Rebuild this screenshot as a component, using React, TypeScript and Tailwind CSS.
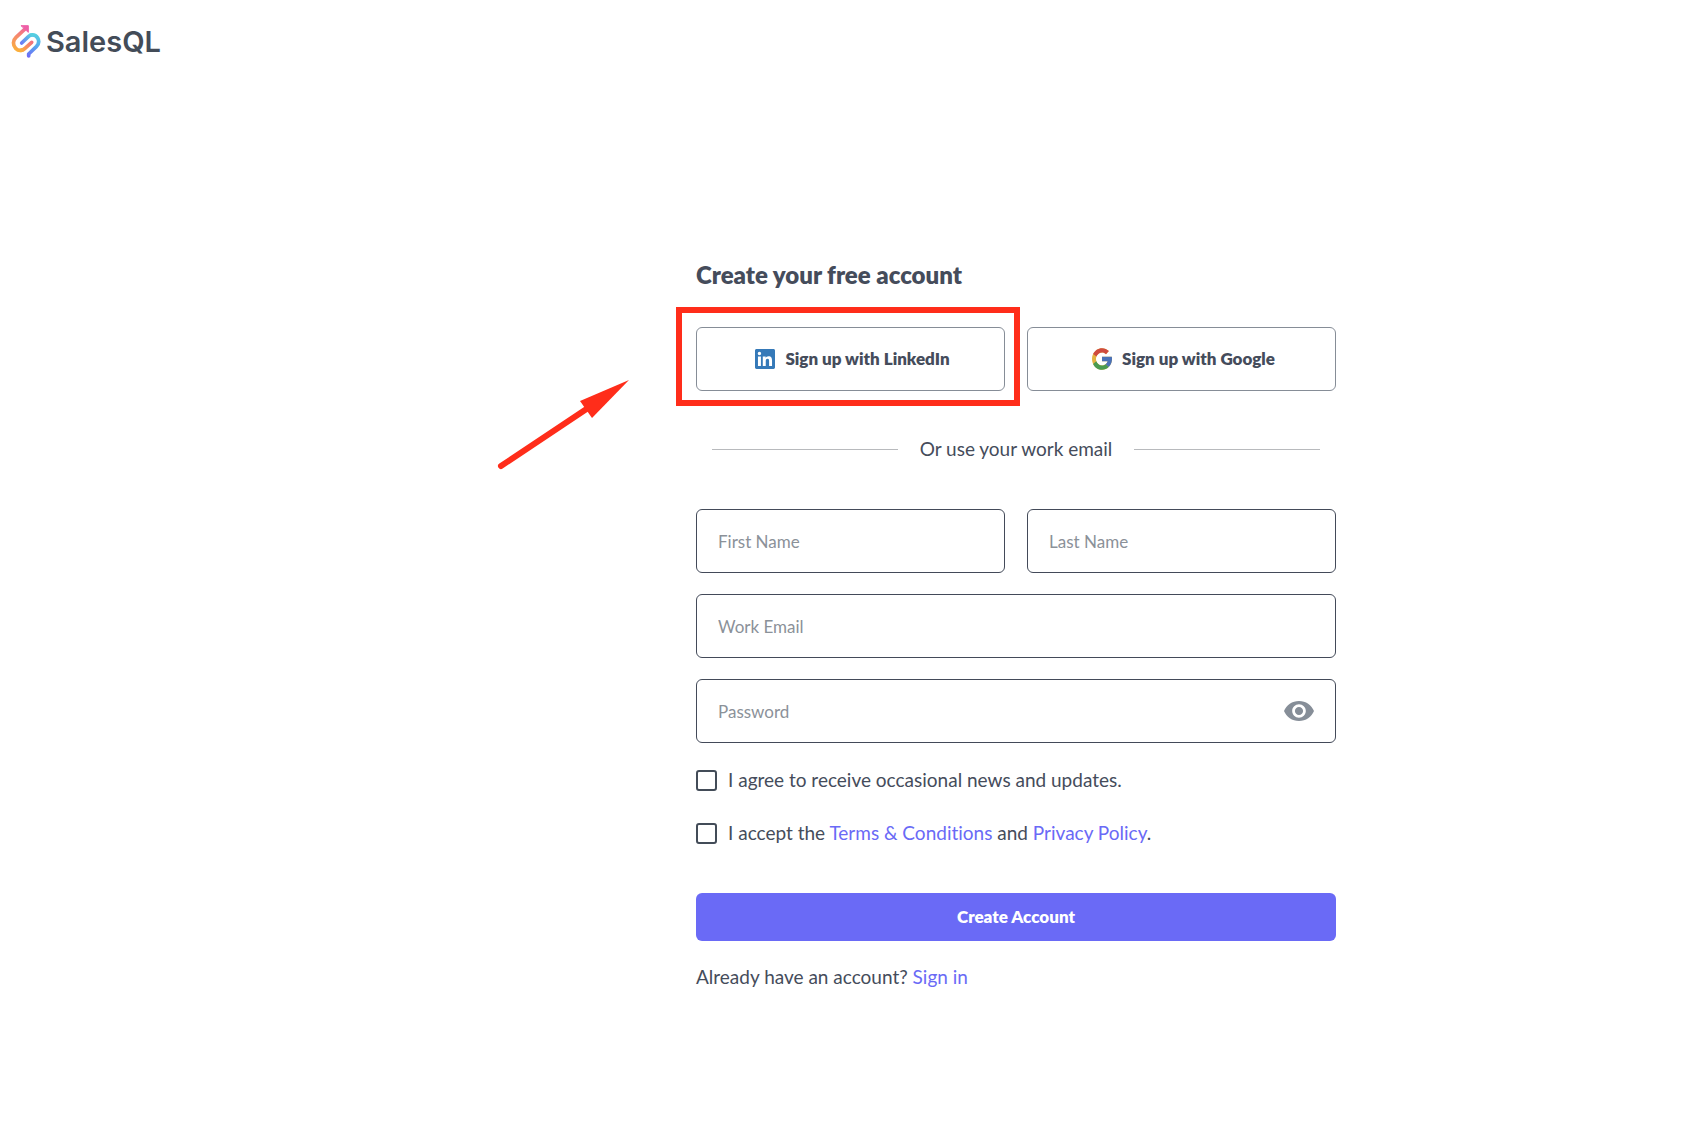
import React, { useState } from "react"

type FieldProps = {
  id: string
  label: string
  type?: string
  className?: string
  children?: React.ReactNode
}

type SocialButtonProps = {
  name: string
  icon: React.ReactNode
}

type CheckboxProps = {
  id: string
  children: React.ReactNode
}

const Logo: React.FC = () => {
  return (
    <a
      href="#"
      className="flex w-fit items-center gap-1 text-[#434c58]"
      aria-label="SalesQL"
    >
      <svg
        width="32"
        height="35"
        viewBox="30 42 96 105"
        fill="none"
        strokeWidth="11"
        strokeLinecap="round"
        strokeLinejoin="round"
      >
        <defs>
          <linearGradient id="warm" x1="80" y1="48" x2="55" y2="125" gradientUnits="userSpaceOnUse">
            <stop offset="0" stopColor="#ee5fa7" />
            <stop offset="0.45" stopColor="#f58a6c" />
            <stop offset="1" stopColor="#fbb03b" />
          </linearGradient>
          <linearGradient id="cool" x1="100" y1="72" x2="88" y2="140" gradientUnits="userSpaceOnUse">
            <stop offset="0" stopColor="#55cfe0" />
            <stop offset="0.5" stopColor="#56a8ee" />
            <stop offset="1" stopColor="#6f6cf7" />
          </linearGradient>
          <linearGradient id="tail" x1="62" y1="122" x2="97" y2="97" gradientUnits="userSpaceOnUse">
            <stop offset="0" stopColor="#fbb03b" />
            <stop offset="1" stopColor="#f1707f" />
          </linearGradient>
          <linearGradient id="inner" x1="95" y1="75" x2="64" y2="100" gradientUnits="userSpaceOnUse">
            <stop offset="0" stopColor="#55cfe0" />
            <stop offset="1" stopColor="#6b7cf5" />
          </linearGradient>
        </defs>
        <path d="M76 56 L48 82 C38 91 38 106 47 115 C53 121 61 122 66 120" stroke="url(#warm)" />
        <path d="M62 121 C67 121 71 119 75 115 L95 97" stroke="url(#tail)" />
        <path d="M92 75 C101 73 109 77 113 84 C118 93 116 103 109 110 L86 132 L86 138" stroke="url(#cool)" />
        <path d="M65 99 L86 79 C89 76 92 75 96 75" stroke="url(#inner)" />
        <path d="M64 47 H85 V66 Z" fill="#ee5fa7" stroke="#ee5fa7" strokeWidth="3" />
      </svg>
      <span className="font-[Inter,sans-serif] text-[29px] leading-8 font-semibold">SalesQL</span>
    </a>
  )
}

const LinkedInIcon: React.FC = () => {
  return (
    <svg width="20" height="20" viewBox="0 0 24 24" aria-hidden="true">
      <path
        fill="#3579b8"
        d="M20.447 20.452h-3.554v-5.569c0-1.328-.027-3.037-1.852-3.037-1.853 0-2.136 1.445-2.136 2.939v5.667H9.351V9h3.414v1.561h.046c.477-.9 1.637-1.85 3.37-1.85 3.601 0 4.267 2.37 4.267 5.455v6.286zM5.337 7.433a2.062 2.062 0 0 1-2.063-2.065 2.064 2.064 0 1 1 2.063 2.065zm1.782 13.019H3.555V9h3.564v11.452zM22.225 0H1.771C.792 0 0 .774 0 1.729v20.542C0 23.227.792 24 1.771 24h20.451C23.2 24 24 23.227 24 22.271V1.729C24 .774 23.2 0 22.222 0h.003z"
      />
    </svg>
  )
}

const GoogleIcon: React.FC = () => {
  return (
    <svg width="20" height="22" viewBox="4 3.5 40 41" preserveAspectRatio="none" aria-hidden="true">
      <path fill="#e3b341" d="M43.6 20H42v0H24v8h11.3C33.7 32.7 29.2 36 24 36c-6.6 0-12-5.4-12-12s5.4-12 12-12c3.1 0 5.8 1.2 8 3l5.7-5.7C34 6 29.3 4 24 4 13 4 4 13 4 24s9 20 20 20 20-9 20-20c0-1.3-.1-2.7-.4-4z" />
      <path fill="#cf4b3f" d="M6.3 14.7l6.6 4.8C14.7 15.1 19 12 24 12c3.1 0 5.8 1.2 8 3l5.7-5.7C34 6 29.3 4 24 4 16.3 4 9.7 8.3 6.3 14.7z" />
      <path fill="#4a9b51" d="M24 44c5.2 0 9.9-2 13.4-5.2l-6.2-5.2C29.2 35.1 26.7 36 24 36c-5.2 0-9.6-3.3-11.3-7.9l-6.5 5C9.5 39.6 16.2 44 24 44z" />
      <path fill="#4a72b8" d="M43.6 20H24v8h11.3c-.8 2.2-2.2 4.2-4.1 5.6l6.2 5.2C37 39.2 44 34 44 24c0-1.3-.1-2.7-.4-4z" />
    </svg>
  )
}

const SocialButton: React.FC<SocialButtonProps> = ({ name, icon }) => {
  return (
    <button
      type="button"
      className="flex h-16 w-full items-center justify-center gap-2.5 rounded-md border border-[#868d97] bg-white pl-1 text-[17px] font-extrabold"
    >
      {icon}
      <span>Sign up with {name}</span>
    </button>
  )
}

const Field: React.FC<FieldProps> = ({ id, label, type = "text", className = "", children }) => {
  return (
    <div className={`relative ${className}`}>
      <input
        id={id}
        type={type}
        aria-label={label}
        placeholder={label}
        className="block h-16 w-full rounded-md border border-[#434a59] bg-white px-[21px] text-[17px] placeholder:text-[#8b9199]"
      />
      {children}
    </div>
  )
}

const Checkbox: React.FC<CheckboxProps> = ({ id, children }) => {
  return (
    <div className="flex items-center gap-[11px]">
      <input
        id={id}
        type="checkbox"
        className="size-[21px] shrink-0 appearance-none rounded-[3px] border-2 border-[#434c58] bg-white checked:bg-[#6a6af6]"
      />
      <label htmlFor={id}>{children}</label>
    </div>
  )
}

const Link: React.FC<{ children: React.ReactNode }> = ({ children }) => {
  return (
    <a href="#" className="text-[#6a6af6]">
      {children}
    </a>
  )
}

// Red frame and arrow that point at the LinkedIn option
const Highlight: React.FC = () => {
  return (
    <>
      <div className="pointer-events-none absolute -top-5 -right-[15px] -bottom-[15px] -left-5 border-6 border-[#ff2d1a]" />
      <svg
        className="pointer-events-none absolute top-12 -left-[206px]"
        width="150"
        height="100"
        viewBox="490 375 150 100"
        fill="#ff2d1a"
        aria-hidden="true"
      >
        <path d="M501 466 L588 408" stroke="#ff2d1a" strokeWidth="6" strokeLinecap="round" />
        <path d="M629 380 L580 401 L592 418 Z" />
      </svg>
    </>
  )
}

const SignUpForm: React.FC = () => {
  const [showPassword, setShowPassword] = useState(false)

  return (
    <form className="w-full max-w-[640px]" onSubmit={(e) => e.preventDefault()}>
      <h1 className="text-2xl leading-8 font-extrabold">Create your free account</h1>

      <div className="mt-9 grid grid-cols-2 gap-[22px]">
        <div className="relative">
          <SocialButton name="LinkedIn" icon={<LinkedInIcon />} />
          <Highlight />
        </div>
        <SocialButton name="Google" icon={<GoogleIcon />} />
      </div>

      <div className="mt-11 flex items-center gap-[22px] px-4">
        <hr className="flex-1 border-[#b8babd]" />
        <p>Or use your work email</p>
        <hr className="flex-1 border-[#b8babd]" />
      </div>

      <div className="mt-[46px] grid grid-cols-2 gap-x-[22px] gap-y-[21px]">
        <Field id="first-name" label="First Name" />
        <Field id="last-name" label="Last Name" />
        <Field id="email" label="Work Email" type="email" className="col-span-2" />
        <Field
          id="password"
          label="Password"
          type={showPassword ? "text" : "password"}
          className="col-span-2"
        >
          <button
            type="button"
            aria-label="Show password"
            onClick={() => setShowPassword(!showPassword)}
            className="absolute inset-y-0 right-[22px]"
          >
            <svg width="30" height="20" viewBox="1 4.5 22 15" preserveAspectRatio="none" fill="#868e98">
              <path d="M12 4.5C7 4.5 2.73 7.61 1 12c1.73 4.39 6 7.5 11 7.5s9.27-3.11 11-7.5c-1.73-4.39-6-7.5-11-7.5zM12 17c-2.76 0-5-2.24-5-5s2.24-5 5-5 5 2.24 5 5-2.24 5-5 5zm0-8c-1.66 0-3 1.34-3 3s1.34 3 3 3 3-1.34 3-3-1.34-3-3-3z" />
            </svg>
          </button>
        </Field>
      </div>

      <div className="mt-[23px] flex flex-col gap-[25px]">
        <Checkbox id="news">I agree to receive occasional news and updates.</Checkbox>
        <Checkbox id="terms">
          I accept the <Link>Terms &amp; Conditions</Link> and <Link>Privacy Policy</Link>.
        </Checkbox>
      </div>

      <button
        type="submit"
        className="mt-[46px] h-12 w-full rounded-md bg-[#6a6af6] text-[17px] font-extrabold text-white"
      >
        Create Account
      </button>

      <p className="mt-[22px]">
        Already have an account? <Link>Sign in</Link>
      </p>
    </form>
  )
}

export default function App() {
  return (
    <div className="min-h-screen bg-white font-[Lato,sans-serif] text-[19px] leading-7 text-[#454c5b] [font-variant-ligatures:none]">
      <header className="px-2.5 pt-6">
        <Logo />
      </header>
      <main className="flex justify-center pt-[200px] pb-16 pl-[342px]">
        <SignUpForm />
      </main>
    </div>
  )
}
